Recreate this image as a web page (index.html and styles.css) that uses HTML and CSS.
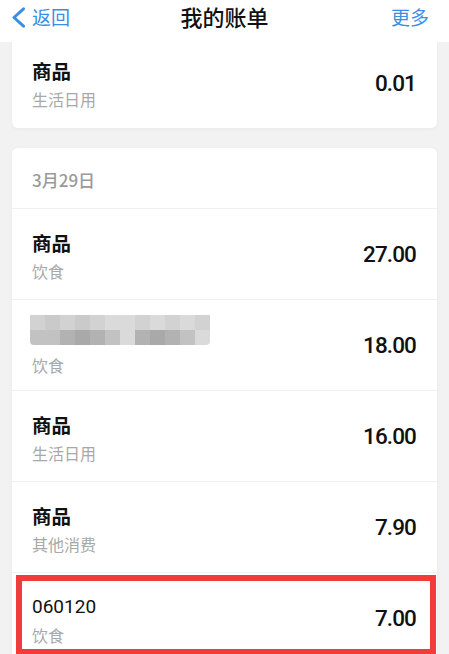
FILE: index.html
```html
<!DOCTYPE html>
<html lang="zh-CN">

<head>
    <meta charset="UTF-8" />
    <meta name="viewport" content="width=device-width, initial-scale=1.0" />
    <title>我的账单</title>
    <link rel="stylesheet" href="styles.css">
</head>

<body>
    <header class="nav">
        <a class="nav-back" href="#">
            <svg class="chevron" width="15" height="21" viewBox="0 0 15 21">
                <path d="M12.5 1.8 L3 10.5 L12.5 19.2" fill="none" stroke="#3a8ee3" stroke-width="3" stroke-linecap="round" stroke-linejoin="round" />
            </svg>
            <span>返回</span>
        </a>
        <h1 class="nav-title">我的账单</h1>
        <a class="nav-more" href="#">更多</a>
    </header>

    <main class="bills">
        <section class="card card-first">
            <div class="bill-row">
                <div class="bill-info">
                    <p class="bill-name">商品</p>
                    <p class="bill-type">生活日用</p>
                </div>
                <span class="bill-amount">0.01</span>
            </div>
        </section>

        <section class="card">
            <div class="card-date">3月29日</div>

            <div class="bill-row">
                <div class="bill-info">
                    <p class="bill-name">商品</p>
                    <p class="bill-type">饮食</p>
                </div>
                <span class="bill-amount">27.00</span>
            </div>

            <div class="bill-row">
                <div class="bill-info">
                    <!-- pixelated (hidden) merchant name -->
                    <div class="mosaic">
                        <span class="m3"></span><span class="m2"></span><span class="m3"></span><span class="m2"></span><span class="m3"></span><span class="m4"></span><span class="m4"></span><span class="m3"></span><span class="m4"></span><span class="m3"></span><span class="m4"></span><span class="m3"></span>
                        <span class="m5"></span><span class="m5"></span><span class="m6"></span><span class="m7"></span><span class="m6"></span><span class="m5"></span><span class="m4"></span><span class="m6"></span><span class="m7"></span><span class="m6"></span><span class="m5"></span><span class="m4"></span>
                    </div>
                    <p class="bill-type">饮食</p>
                </div>
                <span class="bill-amount">18.00</span>
            </div>

            <div class="bill-row">
                <div class="bill-info">
                    <p class="bill-name">商品</p>
                    <p class="bill-type">生活日用</p>
                </div>
                <span class="bill-amount">16.00</span>
            </div>

            <div class="bill-row">
                <div class="bill-info">
                    <p class="bill-name">商品</p>
                    <p class="bill-type">其他消费</p>
                </div>
                <span class="bill-amount">7.90</span>
            </div>

            <div class="bill-row marked">
                <div class="bill-info">
                    <p class="bill-name bill-code">060120</p>
                    <p class="bill-type">饮食</p>
                </div>
                <span class="bill-amount">7.00</span>
                <div class="mark"></div>
            </div>
        </section>
    </main>
</body>

</html>
```

FILE: styles.css
```css
/* Reset some default styles */
* {
    box-sizing: border-box;
    margin: 0;
    padding: 0;
}

body {
    font-family: Roboto, "Noto Sans CJK SC", sans-serif;
    background-color: #f2f2f2;
    color: #111;
    width: 449px;
    overflow: hidden;
}

a {
    text-decoration: none;
}

/* Top navigation bar */
.nav {
    position: relative;
    z-index: 2;
    height: 42px;
    background: #fff;
    display: flex;
    align-items: center;
    justify-content: space-between;
    padding: 0 20px 8px 11px;
}

.nav-back,
.nav-more {
    display: flex;
    align-items: center;
    gap: 6px;
    color: #3a8ee3;
    font-family: "Noto Sans CJK SC", sans-serif;
    font-size: 19px;
    line-height: 24px;
}

.nav-title {
    position: absolute;
    top: 0;
    left: 0;
    right: 0;
    text-align: center;
    font-family: "Noto Sans CJK SC", sans-serif;
    font-size: 22px;
    font-weight: 500;
    line-height: 32px;
    pointer-events: none;
}

/* Bill list */
.bills {
    padding: 0 12px;
}

.card {
    background: #fff;
    border-radius: 6px;
    box-shadow: 0 1px 4px rgba(0, 0, 0, 0.04);
    margin-bottom: 20px;
}

.card-first {
    margin-top: -5px;
}

.card-date {
    padding: 20px 20px 16px;
    font-family: "Noto Sans CJK SC", sans-serif;
    font-size: 17px;
    font-weight: 500;
    line-height: 24px;
    color: #9a9a9a;
}

.bill-row {
    height: 91px;
    display: flex;
    align-items: center;
    justify-content: space-between;
    padding: 0 21px 0 20px;
    border-top: 1px solid #f0f0f0;
}

.card-first .bill-row {
    border-top: none;
}

.bill-info {
    margin-top: 4px;
}

.bill-name {
    font-family: "Noto Sans CJK SC", sans-serif;
    font-size: 19.5px;
    font-weight: 700;
    line-height: 24px;
    margin-bottom: 5px;
}

.bill-code {
    font-family: Roboto, sans-serif;
    font-weight: 400;
    font-size: 19px;
}

.bill-type {
    font-family: "Noto Sans CJK SC", sans-serif;
    font-size: 16px;
    line-height: 22px;
    color: #a8a8a8;
}

.bill-amount {
    font-family: Roboto, sans-serif;
    font-size: 22.5px;
    font-weight: 500;
    letter-spacing: -0.9px;
    color: #111;
}

/* blurred merchant name */
.mosaic {
    display: grid;
    grid-template-columns: repeat(12, 15px);
    grid-template-rows: 15px 15px;
    width: 180px;
    margin: -3px 0 9px -2px;
    border-radius: 0 0 4px 4px;
    overflow: hidden;
}

.m2 { background: #cacaca; }
.m3 { background: #d2d2d2; }
.m4 { background: #dadada; }
.m5 { background: #c2c2c2; }
.m6 { background: #b2b2b2; }
.m7 { background: #a9a9a9; }

/* red annotation box */
.marked {
    position: relative;
}

.mark {
    position: absolute;
    top: 2px;
    left: 4px;
    right: 1px;
    height: 80px;
    border: 6px solid #f23c3c;
}
```
